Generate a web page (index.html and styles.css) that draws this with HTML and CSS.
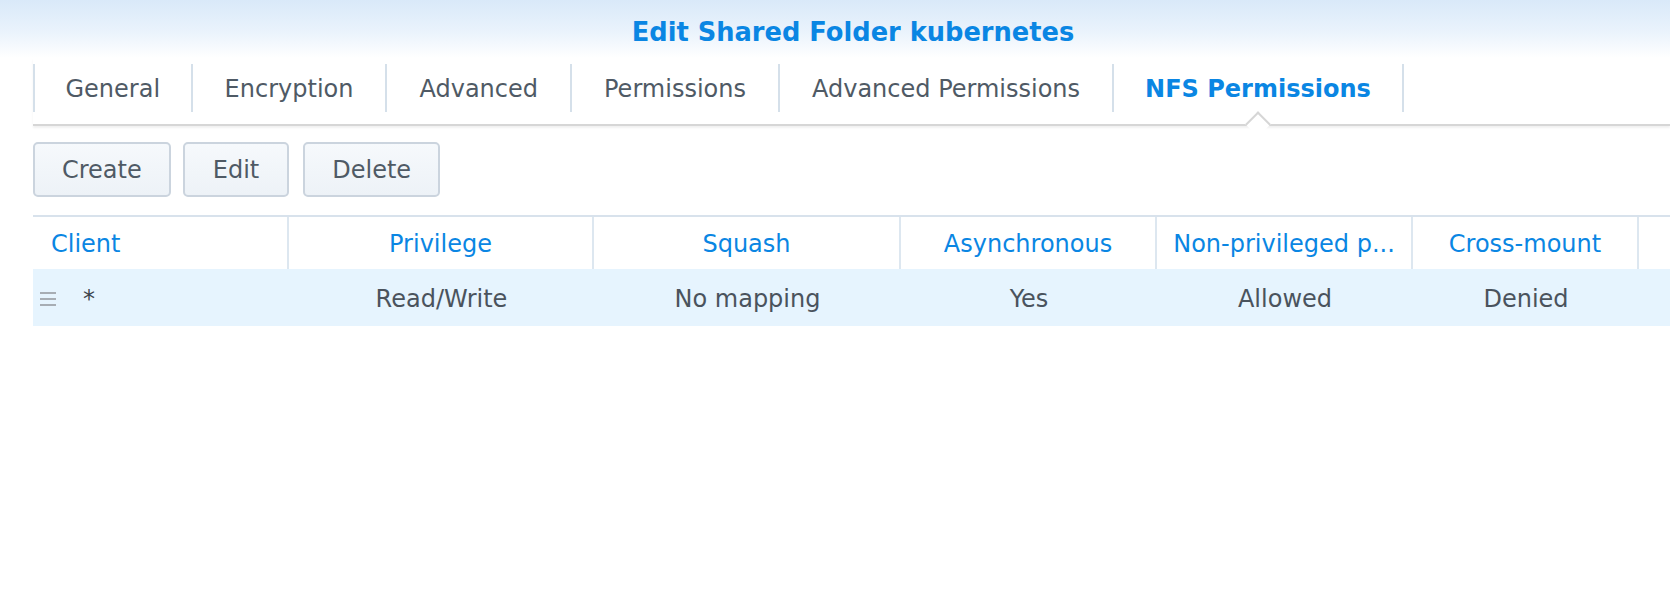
FILE: index.html
```html
<!DOCTYPE html>
<html>
<head>
<meta charset="utf-8">
<link rel="stylesheet" href="styles.css">
</head>
<body>
<div class="window">
  <div class="header">
    <div class="title">Edit Shared Folder kubernetes</div>
  </div>
  <div class="tabbar">
    <div class="tabs">
      <div class="tab">General</div>
      <div class="tab">Encryption</div>
      <div class="tab">Advanced</div>
      <div class="tab">Permissions</div>
      <div class="tab">Advanced Permissions</div>
      <div class="tab active">NFS Permissions<span class="notch"></span></div>
    </div>
  </div>
  <div class="toolbar">
    <button class="btn">Create</button>
    <button class="btn btn-edit">Edit</button>
    <button class="btn">Delete</button>
  </div>
  <div class="grid">
    <div class="hcell left">Client</div>
    <div class="hcell">Privilege</div>
    <div class="hcell">Squash</div>
    <div class="hcell">Asynchronous</div>
    <div class="hcell">Non-privileged p...</div>
    <div class="hcell">Cross-mount</div>
    <div class="hcell last"></div>

    <div class="cell left"><span class="handle"><i></i><i></i><i></i></span><span class="star">*</span></div>
    <div class="cell">Read/Write</div>
    <div class="cell">No mapping</div>
    <div class="cell">Yes</div>
    <div class="cell">Allowed</div>
    <div class="cell">Denied</div>
    <div class="cell"></div>
  </div>
</div>
</body>
</html>
```
FILE: styles.css
```css
* { box-sizing: border-box; }
html, body { margin: 0; padding: 0; background: #fff; }
body {
  font-family: "DejaVu Sans", Verdana, sans-serif;
  font-size: 24px;
  color: #4f5a65;
  overflow: hidden;
  width: 1670px;
  height: 592px;
}
.header {
  height: 58px;
  background: linear-gradient(to bottom, #d9e9f9 0%, #eaf3fc 55%, #ffffff 100%);
  padding-left: 36px;
  display: flex;
  align-items: center;
  justify-content: center;
}
.title {
  font-weight: bold;
  font-size: 25.7px;
  color: #0a86e3;
  padding-top: 5px;
}
.tabbar {
  margin-left: 33px;
  padding-top: 6px;
  padding-bottom: 12px;
  border-bottom: 2px solid #d6d6d6;
  box-shadow: 0 2px 2px rgba(0,0,0,0.06);
  position: relative;
}
.tabs { display: flex; }
.tab {
  height: 48px;
  display: flex;
  align-items: center;
  padding: 2px 32px 0;
  border-left: 2px solid #d5e0ea;
  white-space: nowrap;
  position: relative;
}
.tab:first-child { padding: 2px 30.5px 0; }
.tab.active {
  border-right: 2px solid #d5e0ea;
  color: #0a86e3;
  font-weight: bold;
  padding: 2px 31px 0;
}
.notch {
  position: absolute;
  left: 50%;
  bottom: -21px;
  width: 18px;
  height: 18px;
  margin-left: -9px;
  background: #fff;
  border-top: 2px solid #d6d6d6;
  border-left: 2px solid #d6d6d6;
  transform: rotate(45deg);
}
.toolbar {
  margin: 16px 0 0 33px;
  display: flex;
  gap: 12px;
  height: 55px;
}
.btn {
  font-family: inherit;
  font-size: 24px;
  color: #4f5a65;
  height: 55px;
  padding: 0 27px;
  border: 2px solid #cbd4de;
  border-radius: 5px;
  background: linear-gradient(to bottom, #f6f9fc, #edf2f7);
}
.btn-edit { padding: 0 28px; margin-right: 2px; }
.grid {
  margin: 18px 0 0 33px;
  border-top: 2px solid #d8e2ec;
  display: grid;
  grid-template-columns: 256px 305px 307px 256px 256px 226px 1fr;
}
.hcell {
  height: 52px;
  display: flex;
  align-items: center;
  justify-content: center;
  color: #0a86e3;
  border-right: 2px solid #dde7f0;
  white-space: nowrap;
  padding-top: 2px;
}
.hcell.last { border-right: none; }
.hcell.left { justify-content: flex-start; padding-left: 18px; }
.cell {
  height: 57px;
  display: flex;
  align-items: center;
  justify-content: center;
  background: #e6f4fe;
  color: #4a535d;
  white-space: nowrap;
  padding-top: 2px;
}
.cell.left { justify-content: flex-start; padding-left: 7px; }
.handle {
  display: flex;
  flex-direction: column;
  gap: 4px;
  width: 16px;
  margin-right: 27px;
}
.handle i {
  display: block;
  height: 2px;
  background: #a7adb4;
}
.star { color: #3c444c; }
```
